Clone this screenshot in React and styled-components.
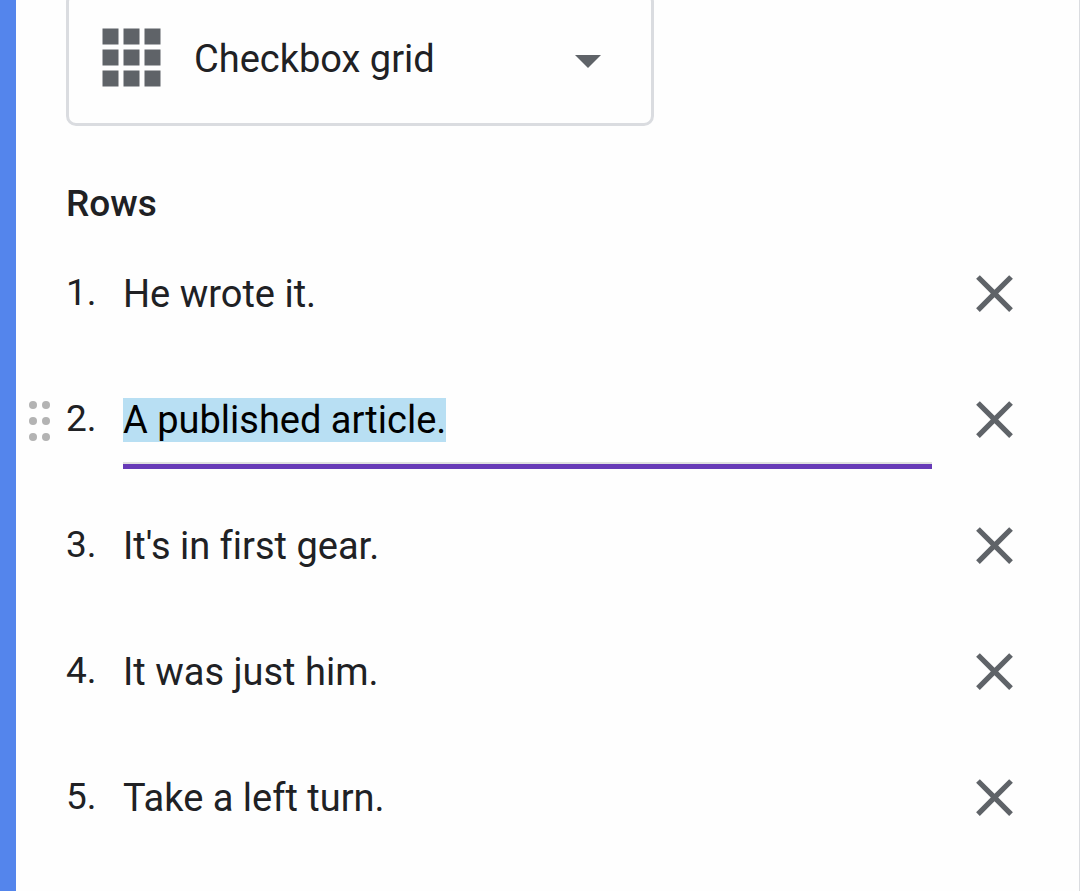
import React, { useEffect, useRef, useState } from "react";
import styled, { createGlobalStyle } from "styled-components";

const GlobalStyle = createGlobalStyle`
  *, *::before, *::after { box-sizing: border-box; }
  body {
    margin: 0;
    background: #fefefe;
    color: #202124;
    font-family: Roboto, "Liberation Sans", sans-serif;
    font-size: 37px;
    line-height: 43px;
    font-variant-ligatures: none;
    overflow: hidden;
  }
`;

const Card = styled.main`
  min-height: 100vh;
  overflow: hidden;
  background: #fefefe;
  border-left: 16px solid #5485ec;
  border-right: 1px solid #dadce0;
`;

const TypePicker = styled.div`
  display: grid;
  grid-template-columns: 36px 60px 1fr 26px 53px;
  align-items: center;
  width: 588px;
  max-width: 100%;
  height: 134px;
  margin: -8px 0 0 50px;
`;

const TypeSelect = styled.select`
  grid-area: 1 / 1 / 2 / -1;
  width: 100%;
  height: 100%;
  padding: 0 80px 0 125px;
  appearance: none;
  border: 3px solid #dadce0;
  border-radius: 10px;
  background: transparent;
  color: inherit;
  font: inherit;
  font-size: 38px;
  outline: none;
`;

const GridIcon = styled.svg`
  grid-area: 1 / 2;
  width: 59px;
  height: 59px;
  margin-bottom: 4px;
  fill: #5f6368;
  pointer-events: none;
`;

const ArrowIcon = styled.svg`
  grid-area: 1 / 4;
  width: 26px;
  height: 13px;
  margin-top: 4px;
  fill: #5f6368;
  pointer-events: none;
`;

const Heading = styled.h2`
  margin: 56px 0 0 50px;
  padding-bottom: 5px;
  font-size: 37px;
  line-height: 43px;
  font-weight: 500;
`;

const List = styled.ol`
  margin: 0;
  padding: 0;
  list-style: none;
`;

const Row = styled.li`
  display: grid;
  grid-template-columns: 50px 57px 1fr 31px 63px 53px;
  align-items: center;
  height: 126px;
`;

const Handle = styled.button`
  grid-column: 1;
  display: flex;
  align-items: center;
  justify-content: center;
  height: 63px;
  padding: 4px 2px 0 0;
  border: 0;
  background: none;
  opacity: ${(p) => (p.$shown ? 1 : 0)};
  cursor: move;

  svg { width: 22px; height: 40px; fill: #b3b3b3; }
`;

const Number = styled.label`
  grid-column: 2;
  padding-bottom: 2px;
`;

const Field = styled.div`
  grid-column: 3;
  align-self: start;
  min-width: 0;
  padding-top: 35px;
  border-bottom: 5px solid ${(p) => (p.$active ? "#673ab7" : "transparent")};
`;

const Answer = styled.input`
  display: block;
  width: 100%;
  height: 73px;
  padding: 0 0 14px;
  border: 0;
  border-bottom: 2px solid ${(p) => (p.$active ? "#e0e0e0" : "transparent")};
  background: none;
  color: inherit;
  font: inherit;
  font-size: 38px;
  outline: none;

  &::selection { background: #b8dff3; color: #000; }
`;

const Remove = styled.button`
  grid-column: 5;
  height: 63px;
  padding: 0;
  border: 0;
  background: none;
  cursor: pointer;

  svg { display: block; width: 63px; height: 63px; fill: #5f6368; }
`;

const ROWS = [
  "He wrote it.",
  "A published article.",
  "It's in first gear.",
  "It was just him.",
  "Take a left turn.",
];

function AnswerRow({ index, value, active, onActivate }) {
  const input = useRef(null);

  useEffect(() => {
    if (active) {
      input.current.focus();
      input.current.select();
    }
  }, [active]);

  return (
    <Row>
      <Handle type="button" $shown={active} aria-label={`Move row ${index}`}>
        <svg viewBox="0 0 22 40" aria-hidden="true">
          {[4, 20, 36].map((y) => (
            <g key={y}>
              <circle cx="4" cy={y} r="4" />
              <circle cx="17" cy={y} r="4" />
            </g>
          ))}
        </svg>
      </Handle>
      <Number htmlFor={`row-${index}`}>{index}.</Number>
      <Field $active={active}>
        <Answer
          ref={input}
          id={`row-${index}`}
          type="text"
          defaultValue={value}
          $active={active}
          onFocus={onActivate}
        />
      </Field>
      <Remove type="button" aria-label={`Remove row ${index}`}>
        <svg viewBox="0 0 24 24" aria-hidden="true">
          <path d="M19 6.41L17.59 5 12 10.59 6.41 5 5 6.41 10.59 12 5 17.59 6.41 19 12 13.41 17.59 19 19 17.59 13.41 12z" />
        </svg>
      </Remove>
    </Row>
  );
}

export default function App() {
  const [active, setActive] = useState(1);

  return (
    <>
      <GlobalStyle />
      <Card>
        <TypePicker>
          <TypeSelect aria-label="Question type" defaultValue="grid">
            <option value="grid">Checkbox grid</option>
          </TypeSelect>
          <GridIcon viewBox="0 0 59 59" aria-hidden="true">
            {[0, 21, 42].map((y) =>
              [0, 21, 42].map((x) => (
                <rect key={`${x}-${y}`} x={x + 0.5} y={y + 0.5} width="16" height="16" />
              ))
            )}
          </GridIcon>
          <ArrowIcon viewBox="0 0 26 13" aria-hidden="true">
            <path d="M0 0h26L13 13z" />
          </ArrowIcon>
        </TypePicker>
        <Heading>Rows</Heading>
        <List>
          {ROWS.map((value, i) => (
            <AnswerRow
              key={value}
              index={i + 1}
              value={value}
              active={active === i}
              onActivate={() => setActive(i)}
            />
          ))}
        </List>
      </Card>
    </>
  );
}
